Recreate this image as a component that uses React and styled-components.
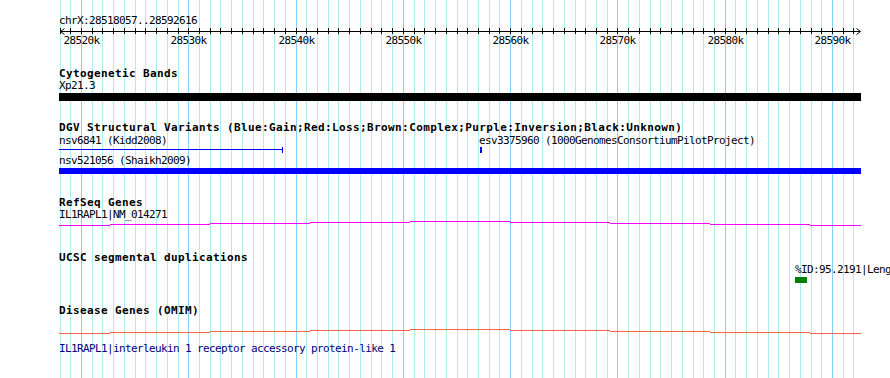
import styled, { createGlobalStyle } from "styled-components";

const GlobalStyle = createGlobalStyle`
  body {
    margin: 0;
    background: #ffffff;
  }
`;

const START = 28518057;
const END = 28592616;
const kbToX = (k) => Math.round(81 + (k - 28520) * 10.729);

const gridKb = [];
for (let k = 28518; k <= 28592; k++) gridKb.push(k);
const majorKb = gridKb.filter((k) => k % 10 === 0);

const Panel = styled.div`
  position: relative;
  width: 890px;
  height: 378px;
  overflow: hidden;
  background: #ffffff;
  font-family: "DejaVu Sans Mono", "Liberation Mono", monospace;
  color: #000;
`;

const GridLayer = styled.svg`
  position: absolute;
  left: 0;
  top: 0;
  width: 890px;
  height: 378px;
`;

const Content = styled.div`
  position: relative;
  display: flex;
  flex-direction: column;
`;

const Label = styled.div`
  margin-top: ${(p) => p.$gap || 0}px;
  padding-left: 59px;
  font-size: 11px;
  letter-spacing: -0.62px;
  line-height: 12px;
  height: 12px;
  white-space: nowrap;
  color: ${(p) => p.$color || "#000"};
`;

const TrackTitle = styled.div`
  margin-top: ${(p) => p.$gap || 0}px;
  padding-left: 59px;
  font-size: 11px;
  font-weight: bold;
  letter-spacing: 0.38px;
  line-height: 12px;
  height: 12px;
  white-space: nowrap;
`;

const Lane = styled.div`
  position: relative;
  margin-top: ${(p) => p.$gap || 0}px;
  height: 12px;
  font-size: 11px;
  letter-spacing: -0.62px;
  line-height: 12px;
  white-space: nowrap;
`;

const LaneText = styled.span`
  position: absolute;
  top: 0;
`;

const Glyph = styled.svg`
  display: block;
  margin-top: ${(p) => p.$gap || 0}px;
  width: 890px;
  height: ${(p) => p.$h}px;
`;

const Bar = styled.div`
  margin-top: ${(p) => p.$gap || 0}px;
  margin-left: 59px;
  width: 802px;
  height: ${(p) => p.$h}px;
  background: ${(p) => p.$color};
`;

function Grid() {
  return (
    <GridLayer viewBox="0 0 890 378">
      {gridKb.map((k) => (
        <rect
          key={k}
          x={kbToX(k)}
          y={0}
          width={1}
          height={378}
          fill={k % 10 === 0 ? "#87cefa" : "#afeeee"}
        />
      ))}
    </GridLayer>
  );
}

function Ruler() {
  return (
    <>
      <Label $gap={15}>
        chrX:{START}..{END}
      </Label>
      <Glyph $h={8} viewBox="0 0 890 8">
        <rect x={60} y={4} width={800} height={1} fill="#000" />
        {gridKb.map((k) => (
          <rect key={k} x={kbToX(k)} y={1} width={1} height={6} fill="#000" />
        ))}
        <path
          d="M60.5 4.5 L64.5 1.5 M60.5 4.5 L64.5 7.5 M860.5 4.5 L856.5 1.5 M860.5 4.5 L856.5 7.5"
          stroke="#000"
          strokeWidth="1"
          fill="none"
        />
      </Glyph>
      <Lane>
        {majorKb.map((k) => (
          <LaneText key={k} style={{ left: kbToX(k) + 0.5 - 18 }}>
            {k}k
          </LaneText>
        ))}
      </Lane>
    </>
  );
}

const steps = [
  [59, 110, 4],
  [110, 210, 3],
  [210, 310, 2],
  [310, 410, 1],
  [410, 510, 0],
  [510, 610, 1],
  [610, 710, 2],
  [710, 810, 3],
  [810, 861, 4],
];

function Transcript({ color, gap }) {
  return (
    <Glyph $gap={gap} $h={5} viewBox="0 0 890 5">
      {steps.map(([a, b, y]) => (
        <rect key={a} x={a} y={y} width={b - a} height={1} fill={color} />
      ))}
    </Glyph>
  );
}

export default function App() {
  return (
    <>
      <GlobalStyle />
      <Panel>
        <Grid />
        <Content>
          <Ruler />

          <TrackTitle $gap={21}>Cytogenetic Bands</TrackTitle>
          <Label>Xp21.3</Label>
          <Bar $gap={1} $h={8} $color="#000" />

          <TrackTitle $gap={21}>
            DGV Structural Variants
            (Blue:Gain;Red:Loss;Brown:Complex;Purple:Inversion;Black:Unknown)
          </TrackTitle>
          <Lane $gap={1}>
            <LaneText style={{ left: 59 }}>nsv6841 (Kidd2008)</LaneText>
            <LaneText style={{ left: 479 }}>
              esv3375960 (1000GenomesConsortiumPilotProject)
            </LaneText>
          </Lane>
          <Glyph $h={6} viewBox="0 0 890 6">
            <rect x={59} y={2} width={224} height={1} fill="#0000ff" />
            <rect x={282} y={0} width={1} height={6} fill="#0000ff" />
            <rect x={480} y={0} width={2} height={6} fill="#0000ff" />
          </Glyph>
          <Label $gap={2}>nsv521056 (Shaikh2009)</Label>
          <Bar $gap={1} $h={6} $color="#0000ff" />

          <TrackTitle $gap={23}>RefSeq Genes</TrackTitle>
          <Label>IL1RAPL1|NM_014271</Label>
          <Transcript color="#ff00ff" />

          <TrackTitle $gap={26}>UCSC segmental duplications</TrackTitle>
          <Lane>
            <LaneText style={{ left: 795 }}>%ID:95.2191|Leng</LaneText>
          </Lane>
          <Glyph $gap={1} $h={6} viewBox="0 0 890 6">
            <rect x={795} y={0} width={12} height={6} fill="#008000" />
          </Glyph>

          <TrackTitle $gap={22}>Disease Genes (OMIM)</TrackTitle>
          <Transcript color="#ff6347" gap={12} />
          <Label $gap={9} $color="#000080">
            IL1RAPL1|interleukin 1 receptor accessory protein-like 1
          </Label>
        </Content>
      </Panel>
    </>
  );
}
